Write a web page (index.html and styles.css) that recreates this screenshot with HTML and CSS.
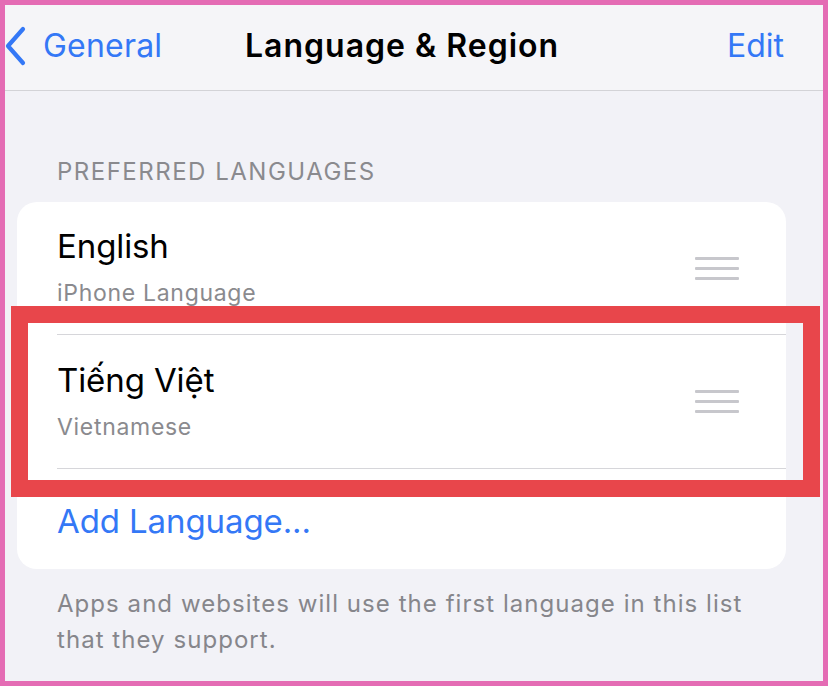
FILE: index.html
```html
<!DOCTYPE html>
<html lang="en">
<head>
<meta charset="utf-8">
<title>Language &amp; Region</title>
<link rel="stylesheet" href="styles.css">
</head>
<body>
<div class="frame">
  <header class="nav">
    <a class="back">
      <svg class="chevron" width="22" height="40" viewBox="0 0 22 40"><path d="M18 3 L3 20 L18 37" fill="none" stroke="#3478f6" stroke-width="4.2" stroke-linecap="round" stroke-linejoin="round"/></svg>
      <span>General</span>
    </a>
    <h1 class="title">Language &amp; Region</h1>
    <a class="edit">Edit</a>
  </header>
  <main class="content">
    <div class="section-header">PREFERRED LANGUAGES</div>
    <div class="card">
      <div class="row">
        <div class="row-inner">
          <div class="text">
            <div class="lang-name">English</div>
            <div class="lang-sub">iPhone Language</div>
          </div>
          <div class="handle"><span></span><span></span><span></span></div>
        </div>
      </div>
      <div class="row row-second">
        <div class="row-inner">
          <div class="text">
            <div class="lang-name">Tiếng Việt</div>
            <div class="lang-sub">Vietnamese</div>
          </div>
          <div class="handle"><span></span><span></span><span></span></div>
        </div>
      </div>
      <div class="add-row">Add Language...</div>
    </div>
    <p class="footer-note">Apps and websites will use the first language in this list that they support.</p>
  </main>
  <div class="highlight"></div>
</div>
</body>
</html>
```
FILE: styles.css
```css
* { box-sizing: border-box; }
html, body { margin: 0; padding: 0; }
body {
  font-family: Inter, "Noto Sans", "DejaVu Sans", sans-serif;
  background: #f2f2f7;
}
.frame {
  position: relative;
  width: 828px;
  height: 686px;
  border: 5px solid #e46cb4;
  background: #f2f2f7;
  overflow: hidden;
}
.nav {
  display: flex;
  align-items: center;
  height: 86px;
  padding-bottom: 4px;
  background: #f5f5f8;
  border-bottom: 1px solid #d3d3d7;
}
.back {
  flex: 0 0 240px;
  display: flex;
  align-items: center;
  color: #3478f6;
  font-size: 32px;
  letter-spacing: 0.2px;
}
.chevron { display: block; margin-left: 0; margin-right: 16px; }
.title {
  margin: 0;
  font-size: 32px;
  font-weight: 600;
  color: #000;
  letter-spacing: 1px;
}
.edit {
  margin-left: auto;
  margin-right: 39px;
  color: #3478f6;
  font-size: 32px;
  letter-spacing: 0;
}
.content {
  padding: 66px 37px 0 12px;
}
.section-header {
  padding-left: 40px;
  font-size: 24px;
  line-height: 30px;
  color: #8a8a8e;
  letter-spacing: 1.5px;
  margin-bottom: 15px;
}
.card {
  background: #fff;
  border-radius: 20px;
  overflow: hidden;
}
.row { padding-left: 40px; }
.row-inner {
  display: flex;
  justify-content: space-between;
  height: 133px;
  padding: 24px 47px 0 0;
  border-bottom: 1px solid #d6d6da;
}
.row-second .row-inner {
  height: 134px;
  padding-top: 25px;
}
.lang-name {
  font-size: 33px;
  line-height: 40px;
  color: #000;
  letter-spacing: -0.1px;
}
.lang-sub {
  margin-top: 12px;
  font-size: 23px;
  line-height: 30px;
  color: #8a8a8e;
  letter-spacing: 0.7px;
}
.handle {
  display: flex;
  flex-direction: column;
  gap: 7.5px;
  margin-top: 31px;
  width: 44px;
}
.row-second .handle { margin-top: 30px; }
.handle span {
  display: block;
  height: 2.5px;
  background: #c7c7cc;
  border-radius: 1px;
}
.add-row {
  height: 100px;
  padding: 32px 0 0 40px;
  font-size: 33px;
  line-height: 40px;
  color: #3478f6;
  letter-spacing: -0.1px;
}
.footer-note {
  margin: 17px 0 0 0;
  padding: 0 30px 0 40px;
  font-size: 24px;
  line-height: 36px;
  color: #86868b;
  letter-spacing: 1.05px;
}
.highlight {
  position: absolute;
  left: 6px;
  top: 301px;
  width: 809px;
  height: 191px;
  border: 17px solid #e8464b;
}
```
